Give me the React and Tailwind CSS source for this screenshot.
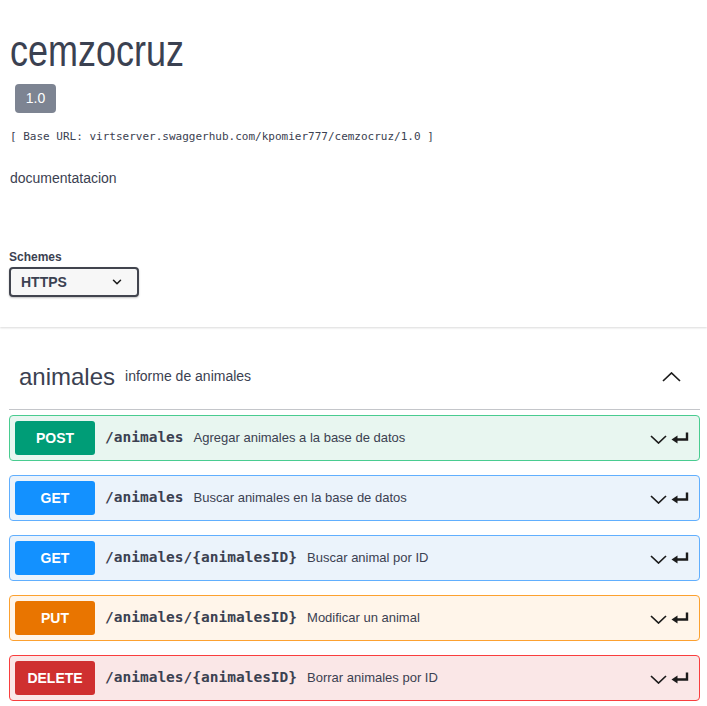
import { ChevronDown } from "lucide-react";

const ops = [
  {
    method: "POST",
    path: "/animales",
    desc: "Agregar animales a la base de datos",
    badge: "bg-[#009d77]",
    box: "border-[#49cc90] bg-[#e8f6f0]",
  },
  {
    method: "GET",
    path: "/animales",
    desc: "Buscar animales en la base de datos",
    badge: "bg-[#1391ff]",
    box: "border-[#61affe] bg-[#ebf3fb]",
  },
  {
    method: "GET",
    path: "/animales/{animalesID}",
    desc: "Buscar animal por ID",
    badge: "bg-[#1391ff]",
    box: "border-[#61affe] bg-[#ebf3fb]",
  },
  {
    method: "PUT",
    path: "/animales/{animalesID}",
    desc: "Modificar un animal",
    badge: "bg-[#e97500]",
    box: "border-[#fca130] bg-[#fff5ea]",
  },
  {
    method: "DELETE",
    path: "/animales/{animalesID}",
    desc: "Borrar animales por ID",
    badge: "bg-[#cf3030]",
    box: "border-[#f93e3e] bg-[#fae7e7]",
  },
];

// flat chevron used by swagger's opblock summary
const Chevron = ({ up = false, w = 17, h = 9 }) => (
  <svg width={w} height={h} viewBox={`0 0 ${w} ${h}`} className="text-[#1b1b1b]">
    <polyline
      points={up ? `1,${h - 1} ${w / 2},1 ${w - 1},${h - 1}` : `1,1 ${w / 2},${h - 1} ${w - 1},1`}
      fill="none"
      stroke="currentColor"
      strokeWidth="1.7"
    />
  </svg>
);

const EnterIcon = () => (
  <svg width="18" height="13" viewBox="0 0 18 13" className="text-[#1b1b1b]">
    <path d="M16 0.5 V7.5 H6" fill="none" stroke="currentColor" strokeWidth="2.4" />
    <path d="M0.5 7.5 L6.5 3.5 V11.5 Z" fill="currentColor" />
  </svg>
);

const OpBlock = ({ op }) => (
  <div className={`flex items-center rounded-[4px] border p-[5px] ${op.box}`}>
    <div
      className={`flex h-[34px] w-[80px] items-center justify-center rounded-[3px] text-[14px] font-bold text-white ${op.badge}`}
    >
      {op.method}
    </div>
    <span className="ml-[10px] font-['DejaVu_Sans_Mono',monospace] text-[14.5px] font-bold text-[#3b4151]">
      {op.path}
    </span>
    <span className="ml-[10px] text-[13px] text-[#3b4151]">{op.desc}</span>
    <div className="ml-auto mr-[5px] flex items-center gap-[4px]">
      <div className="pt-[2px]">
        <Chevron />
      </div>
      <EnterIcon />
    </div>
  </div>
);

export default function App() {
  return (
    <div className="min-h-screen bg-white font-['Liberation_Sans',Arial,sans-serif] text-[#3b4151]">
      <div className="shadow-[0_1px_2px_0_rgba(0,0,0,0.15)] px-[9px] pb-[30px] pt-[36px]">
        <h2 className="ml-[1px] text-[36px] leading-[40px]">
          <span className="inline-block origin-bottom scale-y-125">cemzocruz</span>
        </h2>
        <div className="mt-[8px] ml-[6px] inline-flex h-[29px] w-[41px] items-center justify-center rounded-[4px] bg-[#7d8492] text-[14px] text-white">
          1.0
        </div>
        <p className="mt-[16px] ml-[1px] font-['DejaVu_Sans_Mono',monospace] text-[11px] leading-[16px] text-[#3b4151]">
          [ Base URL: virtserver.swaggerhub.com/kpomier777/cemzocruz/1.0 ]
        </p>
        <p className="mt-[24px] ml-[1px] text-[14px] leading-[18px]">documentatacion</p>
        <div className="mt-[63px] text-[12px] font-bold leading-[14px]">Schemes</div>
        <div className="mt-[3px] flex h-[30px] w-[130px] items-center justify-between rounded-[4px] border-2 border-[#41444e] bg-[#f7f7f7] pl-[10px] pr-[13px] shadow-[0_1px_2px_0_rgba(0,0,0,0.25)]">
          <span className="text-[14px] font-bold text-[#3b4151]">HTTPS</span>
          <ChevronDown className="h-[14px] w-[14px] text-[#1b1b1b]" strokeWidth={2.6} />
        </div>
      </div>

      <div className="pl-[9px] pr-[7px] pt-[32px]">
        <div className="flex items-center border-b border-[rgba(59,65,81,0.3)] pb-[15px] pl-[10px] pr-[19px]">
          <span className="text-[24px] leading-[35px]">animales</span>
          <span className="ml-[10px] text-[14px]">informe de animales</span>
          <div className="ml-auto">
            <Chevron up w={19} h={10} />
          </div>
        </div>
        <div className="mt-[5px] flex flex-col gap-[14px]">
          {ops.map((op, i) => (
            <OpBlock key={i} op={op} />
          ))}
        </div>
      </div>
    </div>
  );
}
